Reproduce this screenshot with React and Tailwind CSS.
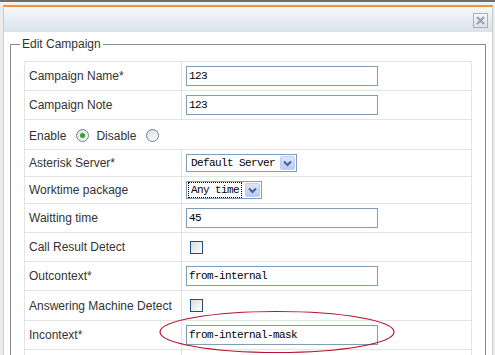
import React from "react";

const mono = { fontFamily: '"Liberation Mono", monospace', letterSpacing: "-0.6px" };

function TextInput({ value }) {
  return (
    <div
      className="w-[192px] h-[20px] border border-[#7f9db9] bg-white pl-[2px] flex items-center text-[11px] text-black"
      style={mono}
    >
      {value}
    </div>
  );
}

function Chevron() {
  return (
    <svg width="9" height="7" viewBox="0 0 9 7">
      <polyline points="1,1.5 4.5,5 8,1.5" fill="none" stroke="#4d6185" strokeWidth="2" />
    </svg>
  );
}

function Select({ value, width, focused }) {
  return (
    <div
      className="h-[18px] border border-[#7f9db9] bg-white flex items-center justify-between pl-[1px] pr-[1px]"
      style={{ width }}
    >
      <span
        className={
          "text-[11px] text-black leading-[14px] px-[2px] " +
          (focused ? "border border-dotted border-black" : "border border-transparent")
        }
        style={mono}
      >
        {value}
      </span>
      <span className="w-[15px] h-[14px] rounded-[2px] bg-gradient-to-b from-[#dbe6fe] to-[#b7cbf8] border border-[#bccdf5] flex items-center justify-center">
        <Chevron />
      </span>
    </div>
  );
}

function Checkbox() {
  return (
    <span className="block w-[13px] h-[13px] border border-[#1c5180] bg-gradient-to-br from-[#dcdcd7] to-white" />
  );
}

function Radio({ checked }) {
  return (
    <span className="w-[13px] h-[13px] rounded-full border border-[#6b82a0] bg-gradient-to-br from-[#dcdcd7] to-white flex items-center justify-center">
      {checked && <span className="w-[5px] h-[5px] rounded-full bg-[#2fa32f]" />}
    </span>
  );
}

function Row({ label, h, children }) {
  return (
    <div className="flex border-b border-[#e3e3e0]" style={{ height: h }}>
      <div className="w-[157px] border-r border-[#e3e3e0] pl-[4px] flex items-center text-[12px] text-[#333]">
        {label}
      </div>
      <div className="flex-1 pl-[4px] flex items-center">{children}</div>
    </div>
  );
}

export default function App() {
  return (
    <div
      className="relative w-[495px] h-[355px] overflow-hidden bg-[#ececec]"
      style={{ fontFamily: '"Liberation Sans", Arial, sans-serif' }}
    >
      <div className="h-[2px] bg-[#6e6e6e]" />
      <div className="h-[3px] bg-[#f2f2f2]" />
      <div className="ml-[3px] w-[490px] h-[400px] border-l border-r border-[#c8ccd0] border-t-2 border-t-[#f3922e] bg-white">
        <div className="h-[25px] bg-gradient-to-b from-[#f6f8fa] to-[#d9e3eb] flex justify-end items-start pt-[6px] pr-[4px]">
          <div className="w-[15px] h-[15px] border border-[#a9b0b7] bg-gradient-to-b from-[#f4f6f8] to-[#dde2e7] flex items-center justify-center">
            <svg width="11" height="11" viewBox="0 0 11 11">
              <path d="M2 2 L9 9 M9 2 L2 9" stroke="#9ea5ac" strokeWidth="2.4" />
            </svg>
          </div>
        </div>
        <div className="pt-[5px]">
          <fieldset className="ml-[6px] w-[476px] border border-[#8c8c8c] px-[13px] pt-[10px] pb-[10px]">
            <legend className="-ml-[4px] px-[2px] text-[12px] leading-[14px] text-[#333]">Edit Campaign</legend>
            <div className="w-[448px] border-l border-r border-t border-[#e3e3e0]">
              <Row label="Campaign Name*" h={29}>
                <TextInput value="123" />
              </Row>
              <Row label="Campaign Note" h={29}>
                <TextInput value="123" />
              </Row>
              <div className="flex items-center border-b border-[#e3e3e0] pl-[4px] pt-[2px] text-[12px] text-[#333] h-[30px]">
                <span>Enable</span>
                <span className="ml-[10px]">
                  <Radio checked />
                </span>
                <span className="ml-[7px]">Disable</span>
                <span className="ml-[10px]">
                  <Radio />
                </span>
              </div>
              <Row label="Asterisk Server*" h={27}>
                <Select value="Default Server" width={111} />
              </Row>
              <Row label="Worktime package" h={27}>
                <Select value="Any time" width={76} focused />
              </Row>
              <Row label="Waitting time" h={29}>
                <TextInput value="45" />
              </Row>
              <Row label="Call Result Detect" h={29}>
                <span className="ml-[4px]">
                  <Checkbox />
                </span>
              </Row>
              <Row label="Outcontext*" h={29}>
                <TextInput value="from-internal" />
              </Row>
              <Row label="Answering Machine Detect" h={30}>
                <span className="ml-[4px]">
                  <Checkbox />
                </span>
              </Row>
              <Row label="Incontext*" h={29}>
                <TextInput value="from-internal-mask" />
              </Row>
              <Row label="" h={29}>
                <span />
              </Row>
            </div>
          </fieldset>
        </div>
      </div>
      <svg className="absolute left-[158px] top-[309px]" width="238" height="46" viewBox="0 0 238 46">
        <ellipse cx="119" cy="23" rx="117" ry="20.5" fill="none" stroke="#b5122c" strokeWidth="1.2" />
      </svg>
    </div>
  );
}
